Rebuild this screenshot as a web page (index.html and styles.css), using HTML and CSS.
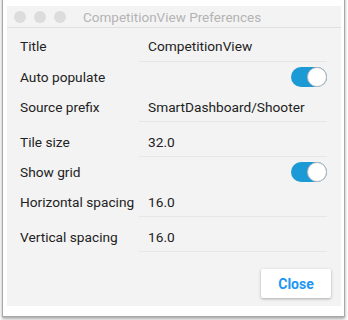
FILE: index.html
```html
<!DOCTYPE html>
<html lang="en">
<head>
    <meta charset="UTF-8">
    <title>CompetitionView Preferences</title>
    <link rel="stylesheet" href="styles.css">
</head>
<body>
    <div class="frame">
        <div class="window">
            <div class="titlebar">
                <div class="lights">
                    <span class="light"></span>
                    <span class="light"></span>
                    <span class="light"></span>
                </div>
                <div class="window-title">CompetitionView Preferences</div>
            </div>
            <div class="props">
                <div class="row text-row first">
                    <div class="label">Title</div>
                    <div class="field">CompetitionView</div>
                </div>
                <div class="row toggle-row">
                    <div class="label">Auto populate</div>
                    <div class="toggle on"><span class="knob"></span></div>
                </div>
                <div class="row text-row">
                    <div class="label">Source prefix</div>
                    <div class="field">SmartDashboard/Shooter</div>
                </div>
                <div class="row text-row">
                    <div class="label">Tile size</div>
                    <div class="field">32.0</div>
                </div>
                <div class="row toggle-row">
                    <div class="label">Show grid</div>
                    <div class="toggle on"><span class="knob"></span></div>
                </div>
                <div class="row text-row">
                    <div class="label">Horizontal spacing</div>
                    <div class="field">16.0</div>
                </div>
                <div class="row text-row">
                    <div class="label">Vertical spacing</div>
                    <div class="field">16.0</div>
                </div>
            </div>
            <div class="actions">
                <button class="close-btn">Close</button>
            </div>
        </div>
    </div>
</body>
</html>
```

FILE: styles.css
```css
* {
    box-sizing: border-box;
}
html, body {
    margin: 0;
    padding: 0;
    background-color: #ffffff;
}
body {
    font-family: Roboto, "Liberation Sans", sans-serif;
    width: 348px;
    height: 320px;
    overflow: hidden;
}
.frame {
    margin: -20px 0 0 2px;
    width: 343px;
    height: 337px;
    padding: 26px 0 0 4px;
    background-color: #ffffff;
    border: 1px solid #a8a8a8;
    border-top: none;
    box-shadow: 0 2px 3px rgba(0,0,0,0.35);
}
.window {
    width: 334px;
    height: 300px;
    background-color: #f3f3f3;
    display: flex;
    flex-direction: column;
}
.titlebar {
    height: 22px;
    border-bottom: 1px solid #e0e0e0;
    background-color: #f3f3f3;
    display: flex;
    align-items: center;
}
.lights {
    display: flex;
    gap: 8px;
    padding-left: 7px;
}
.light {
    width: 12px;
    height: 12px;
    border-radius: 50%;
    background-color: #dcdcdc;
}
.window-title {
    margin-left: 17px;
    font-size: 13.5px;
    color: #b3b3b3;
}
.props {
    display: flex;
    flex-direction: column;
}
.row {
    display: grid;
    grid-template-columns: 119px 188px;
    padding-left: 13px;
    font-size: 13.7px;
    color: #222222;
}
.label {
    line-height: 17px;
}
.text-row {
    height: 35px;
}
.text-row .label {
    padding-top: 12px;
}
.text-row .field {
    padding: 12px 0 0 9px;
    line-height: 17px;
    border-bottom: 1px solid #e6e6e6;
}
.text-row.first {
    height: 34px;
}
.text-row.first .label,
.text-row.first .field {
    padding-top: 10px;
}
.toggle-row {
    height: 25px;
    align-items: end;
}
.toggle-row .label {
    padding-bottom: 1px;
}
.toggle {
    justify-self: end;
    width: 36px;
    height: 20px;
    border-radius: 10px;
    background-color: #1b9ad6;
    position: relative;
}
.knob {
    position: absolute;
    right: 0;
    top: 0;
    width: 20px;
    height: 20px;
    border-radius: 50%;
    background-color: #ffffff;
    border: 1px solid #b8b8b8;
}
.actions {
    display: flex;
    justify-content: flex-end;
    padding: 17px 10px 0 0;
}
.close-btn {
    width: 70px;
    height: 29px;
    border: none;
    border-radius: 2px;
    background-color: #ffffff;
    box-shadow: 0 1px 3px rgba(0,0,0,0.3);
    font-family: Roboto, "Liberation Sans", sans-serif;
    font-size: 14px;
    font-weight: bold;
    color: #2196f3;
}
```
